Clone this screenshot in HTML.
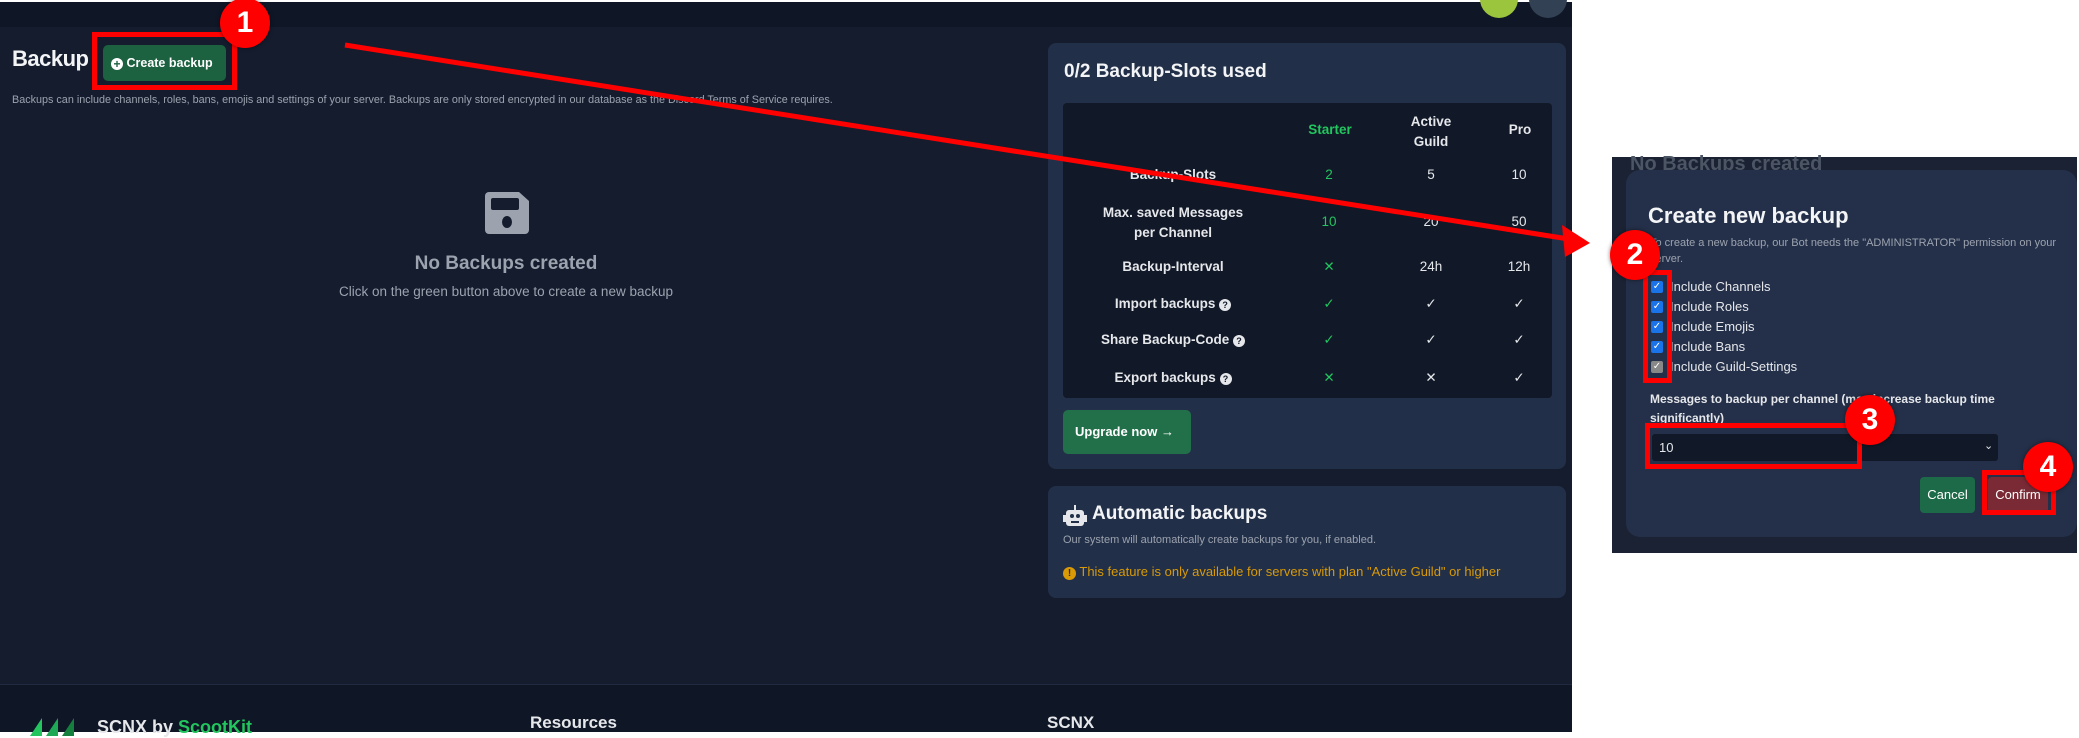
<!DOCTYPE html>
<html><head><meta charset="utf-8"><style>
*{margin:0;padding:0;box-sizing:border-box}
body{width:2079px;height:732px;background:#fff;position:relative;overflow:hidden;font-family:"Liberation Sans",sans-serif;color:#e5e7eb}
.a{position:absolute}
.c{text-align:center}
.b{font-weight:bold}
.badge{position:absolute;width:50px;height:50px;border-radius:50%;background:#f00;color:#fff;font:bold 30px "Liberation Sans",sans-serif;text-align:center;line-height:50px;box-shadow:0 0 4px rgba(0,0,0,.5)}
.rb{position:absolute;border:5px solid #f00}
.cb{position:absolute;width:12px;height:12px;background:#1a73e8;border-radius:2px;color:#fff;font-size:10px;line-height:12px;text-align:center}
</style></head><body>
<div class="a" style="left:0;top:2px;width:1572px;height:730px;background:#141c2e"></div>
<div class="a" style="left:0;top:2px;width:1572px;height:25px;background:#0f1626"></div>
<div class="a" style="left:1480px;top:-20px;width:38px;height:38px;border-radius:50%;background:#9bc53d"></div>
<div class="a" style="left:1529px;top:-20px;width:38px;height:38px;border-radius:50%;background:#334155"></div>
<div class="a b" style="left:12px;top:46px;font-size:22px;color:#f3f4f6;letter-spacing:-0.5px">Backup</div>
<div class="a b" style="left:103px;top:45px;width:123px;height:36px;background:#1c6140;border-radius:5px;font-size:12.5px;color:#fff;line-height:36px;padding-left:8px;white-space:nowrap"><span style="display:inline-block;width:12px;height:12px;border-radius:50%;background:#fff;color:#1c6140;font-size:12px;line-height:12px;text-align:center;vertical-align:-1px">+</span> Create backup</div>
<div class="rb" style="left:92px;top:32px;width:145px;height:58px"></div>
<div class="a" style="left:12px;top:94px;font-size:10.8px;color:#9ca3af;white-space:nowrap">Backups can include channels, roles, bans, emojis and settings of your server. Backups are only stored encrypted in our database as the Discord Terms of Service requires.</div>
<svg class="a" style="left:485px;top:192px" width="44" height="42" viewBox="0 0 44 42"><path d="M4 0h30l10 9v29a4 4 0 0 1-4 4H4a4 4 0 0 1-4-4V4a4 4 0 0 1 4-4z" fill="#9ca3af"/><rect x="6" y="6" width="28" height="12" rx="2" fill="#141c2e"/><ellipse cx="22" cy="30" rx="5" ry="6" fill="#141c2e"/></svg>
<div class="a c b" style="left:306px;top:253px;width:400px;font-size:19px;color:#9ca3af">No Backups created</div>
<div class="a c" style="left:306px;top:284px;width:400px;font-size:13.5px;color:#9ca3af">Click on the green button above to create a new backup</div>

<div class="a" style="left:1048px;top:43px;width:518px;height:426px;background:#222f48;border-radius:8px"></div>
<div class="a b" style="left:1064px;top:61px;font-size:19px;color:#f3f4f6">0/2 Backup-Slots used</div>
<div class="a" style="left:1063px;top:103px;width:489px;height:295px;background:#111827;border-radius:4px"></div>
<div class="a b c" style="left:1300px;top:122px;width:60px;font-size:13.5px;color:#22c55e">Starter</div>
<div class="a b c" style="left:1391px;top:112px;width:80px;font-size:13.5px;line-height:20px">Active<br>Guild</div>
<div class="a b c" style="left:1490px;top:122px;width:60px;font-size:13.5px">Pro</div>
<div class="a" style="left:1063px;top:0;width:489px;font-size:13.5px">
<div class="a b c" style="left:30px;top:167px;width:160px">Backup-Slots</div>
<div class="a c" style="left:236px;top:167px;width:60px;color:#22c55e">2</div>
<div class="a c" style="left:338px;top:167px;width:60px">5</div>
<div class="a c" style="left:426px;top:167px;width:60px">10</div>
<div class="a b c" style="left:20px;top:203px;width:180px;line-height:20px">Max. saved Messages<br>per Channel</div>
<div class="a c" style="left:236px;top:214px;width:60px;color:#22c55e">10</div>
<div class="a c" style="left:338px;top:214px;width:60px">20</div>
<div class="a c" style="left:426px;top:214px;width:60px">50</div>
<div class="a b c" style="left:30px;top:259px;width:160px">Backup-Interval</div>
<div class="a c" style="left:236px;top:259px;width:60px;color:#22c55e">✕</div>
<div class="a c" style="left:338px;top:259px;width:60px">24h</div>
<div class="a c" style="left:426px;top:259px;width:60px">12h</div>
<div class="a b c" style="left:20px;top:296px;width:180px">Import backups <span style="display:inline-block;width:12px;height:12px;border-radius:50%;background:#e5e7eb;color:#111827;font-size:9px;line-height:12px">?</span></div>
<div class="a c" style="left:236px;top:296px;width:60px;color:#22c55e">✓</div>
<div class="a c" style="left:338px;top:296px;width:60px">✓</div>
<div class="a c" style="left:426px;top:296px;width:60px">✓</div>
<div class="a b c" style="left:10px;top:332px;width:200px">Share Backup-Code <span style="display:inline-block;width:12px;height:12px;border-radius:50%;background:#e5e7eb;color:#111827;font-size:9px;line-height:12px">?</span></div>
<div class="a c" style="left:236px;top:332px;width:60px;color:#22c55e">✓</div>
<div class="a c" style="left:338px;top:332px;width:60px">✓</div>
<div class="a c" style="left:426px;top:332px;width:60px">✓</div>
<div class="a b c" style="left:20px;top:370px;width:180px">Export backups <span style="display:inline-block;width:12px;height:12px;border-radius:50%;background:#e5e7eb;color:#111827;font-size:9px;line-height:12px">?</span></div>
<div class="a c" style="left:236px;top:370px;width:60px;color:#22c55e">✕</div>
<div class="a c" style="left:338px;top:370px;width:60px">✕</div>
<div class="a c" style="left:426px;top:370px;width:60px">✓</div>
</div>
<div class="a b" style="left:1063px;top:410px;width:128px;height:44px;background:#22704a;border-radius:5px;font-size:13px;line-height:44px;padding-left:12px;color:#fff">Upgrade now →</div>

<div class="a" style="left:1048px;top:486px;width:518px;height:112px;background:#222f48;border-radius:8px"></div>
<svg class="a" style="left:1063px;top:505px" width="24" height="22" viewBox="0 0 24 22"><rect x="11" y="0" width="2" height="5" fill="#e5e7eb"/><rect x="3" y="5" width="18" height="16" rx="3" fill="#e5e7eb"/><rect x="0" y="10" width="3" height="7" fill="#e5e7eb"/><rect x="21" y="10" width="3" height="7" fill="#e5e7eb"/><circle cx="9" cy="11" r="2" fill="#222f48"/><circle cx="15" cy="11" r="2" fill="#222f48"/><rect x="8" y="16" width="8" height="2" fill="#222f48"/></svg>
<div class="a b" style="left:1092px;top:503px;font-size:19px;color:#f3f4f6">Automatic backups</div>
<div class="a" style="left:1063px;top:534px;font-size:11px;color:#9ca3af">Our system will automatically create backups for you, if enabled.</div>
<div class="a" style="left:1063px;top:564px;font-size:13px;color:#d99a06;white-space:nowrap"><span style="display:inline-block;width:13px;height:13px;border-radius:50%;background:#d99a06;color:#222f48;font-size:10px;line-height:13px;text-align:center;font-weight:bold">!</span> This feature is only available for servers with plan "Active Guild" or higher</div>

<div class="a" style="left:0;top:684px;width:1572px;height:48px;background:#0f1626;border-top:1px solid #1f2a40"></div>
<svg class="a" style="left:30px;top:716px" width="50" height="20" viewBox="0 0 50 20"><path d="M0 20L12 2v18z" fill="#22c55e"/><path d="M16 20L28 2v18z" fill="#1ea957"/><path d="M32 20L44 2v18z" fill="#15803d"/></svg>
<div class="a b" style="left:97px;top:717px;font-size:18px;color:#e5e7eb">SCNX by <span style="color:#22c55e">ScootKit</span></div>
<div class="a b" style="left:530px;top:713px;font-size:17px;color:#e5e7eb">Resources</div>
<div class="a b" style="left:1047px;top:713px;font-size:17px;color:#e5e7eb">SCNX</div>

<div class="a" style="left:1612px;top:157px;width:465px;height:396px;background:#1a2234"></div>
<div class="a b" style="left:1630px;top:153px;font-size:20px;color:#4b5563">No Backups created</div>
<div class="a" style="left:1626px;top:170px;width:451px;height:367px;background:#243049;border-radius:14px"></div>
<div class="a b" style="left:1648px;top:203px;font-size:22px;color:#f3f4f6">Create new backup</div>
<div class="a" style="left:1650px;top:235px;width:420px;font-size:11px;line-height:16px;color:#9ca3af">To create a new backup, our Bot needs the "ADMINISTRATOR" permission on your server.</div>
<div class="cb" style="left:1651px;top:281px">✓</div><div class="a" style="left:1670px;top:279px;font-size:13px">Include Channels</div>
<div class="cb" style="left:1651px;top:301px">✓</div><div class="a" style="left:1670px;top:299px;font-size:13px">Include Roles</div>
<div class="cb" style="left:1651px;top:321px">✓</div><div class="a" style="left:1670px;top:319px;font-size:13px">Include Emojis</div>
<div class="cb" style="left:1651px;top:341px">✓</div><div class="a" style="left:1670px;top:339px;font-size:13px">Include Bans</div>
<div class="cb" style="left:1651px;top:361px;background:#888">✓</div><div class="a" style="left:1670px;top:359px;font-size:13px">Include Guild-Settings</div>
<div class="rb" style="left:1643px;top:270px;width:29px;height:113px"></div>
<div class="a b" style="left:1650px;top:390px;width:400px;font-size:12px;line-height:19px;color:#e5e7eb">Messages to backup per channel (may increase backup time significantly)</div>
<div class="a" style="left:1652px;top:434px;width:346px;height:27px;background:#111827;border-radius:3px"></div>
<div class="a" style="left:1659px;top:440px;font-size:13px">10</div>
<div class="a" style="left:1984px;top:439px;font-size:11px">⌄</div>
<div class="rb" style="left:1645px;top:423px;width:217px;height:46px"></div>
<div class="a" style="left:1920px;top:477px;width:55px;height:36px;background:#1d6a48;border-radius:4px;font-size:13px;line-height:36px;text-align:center;color:#fff">Cancel</div>
<div class="a" style="left:1988px;top:477px;width:60px;height:36px;background:#7a2a35;border-radius:4px;font-size:13px;line-height:36px;text-align:center;color:#fff">Confirm</div>
<div class="rb" style="left:1982px;top:470px;width:74px;height:45px"></div>

<svg class="a" style="left:0;top:0" width="2079" height="732"><line x1="345" y1="45" x2="1575" y2="240" stroke="#f00" stroke-width="5"/><path d="M1590 243L1562 225L1565 257z" fill="#f00"/></svg>

<div class="badge" style="left:220px;top:-2px">1</div>
<div class="badge" style="left:1610px;top:230px">2</div>
<div class="badge" style="left:1845px;top:395px">3</div>
<div class="badge" style="left:2023px;top:442px">4</div>
</body></html>
